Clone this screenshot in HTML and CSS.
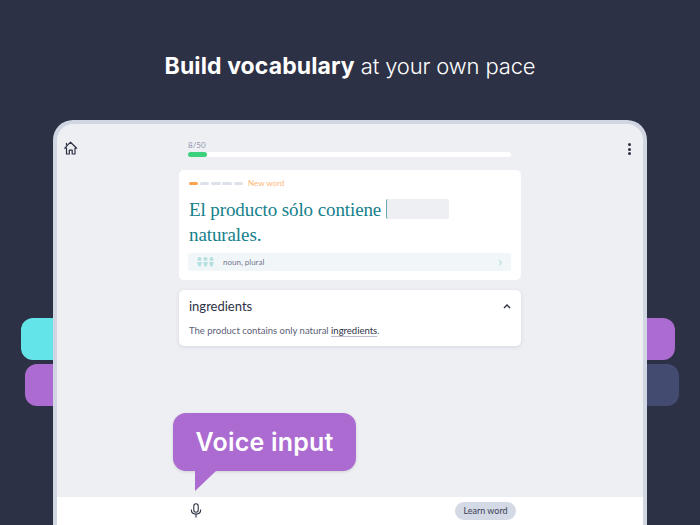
FILE: index.html
```html
<!DOCTYPE html>
<html>
  <head>
    <title>Build vocabulary at your own pace</title>
    <link rel="stylesheet" href="styles.css">
  </head>

  <body>
    <h1 class="headline"><b>Build vocabulary</b> at your own pace</h1>

    <div class="stage">
      <div class="tile tile-cyan"></div>
      <div class="tile tile-purple-left"></div>
      <div class="tile tile-purple-right"></div>
      <div class="tile tile-navy"></div>

      <div class="tablet">
        <div class="screen">
          <div class="topbar">
            <svg class="home" width="14" height="14" viewBox="0 0 14 14" fill="none" stroke="#2d3145" stroke-width="1.2">
              <path d="M.8 7.200 6.500 1.200l6.200 6h-1.700V13H8.200V9.200H5.300V13H2.500V7.200z" stroke-linejoin="round"/>
              <path d="M2.500 4.500V1.800"/>
            </svg>
            <div class="progress">
              <div class="count">8/50</div>
              <div class="track"><div class="fill"></div></div>
            </div>
            <div class="dots"><i></i><i></i><i></i></div>
          </div>

          <div class="column">
            <div class="card word-card">
              <div class="level">
                <i class="dash on"></i><i class="dash"></i><i class="dash"></i><i class="dash"></i><i class="dash"></i>
                <span>New word</span>
              </div>
              <p class="sentence">El producto sólo contiene <span class="blank"></span> naturales.</p>
              <div class="grammar">
                <svg class="people" width="17" height="10" viewBox="0 0 17 10" fill="#b5dfe0">
                  <circle cx="2.500" cy="2" r="2"/><circle cx="8.500" cy="2" r="2"/><circle cx="14.500" cy="2" r="2"/>
                  <path d="M0 5h5L3.500 9.500h-2zM6 5h5L9.500 9.500h-2zM12 5h5L15.500 9.500h-2z"/>
                </svg>
                <span class="grammar-text">noun, plural</span>
                <svg class="more" width="5" height="7" viewBox="0 0 5 7" fill="none" stroke="#c5dfe3" stroke-width="1.200"><path d="M1 1l2.500 2.500L1 6"/></svg>
              </div>
            </div>

            <div class="card hint-card">
              <div class="hint-head">
                <span class="hint-word">ingredients</span>
                <svg width="8" height="5" viewBox="0 0 8 5" fill="none" stroke="#2d3145" stroke-width="1.400"><path d="M1 4l3-3 3 3"/></svg>
              </div>
              <p class="hint-text">The product contains only natural <u>ingredients</u>.</p>
            </div>
          </div>

          <div class="bottombar">
            <svg class="mic" width="12" height="15" viewBox="0 0 12 15" fill="none" stroke="#2d3145" stroke-width="1.100">
              <rect x="3.800" y="0.800" width="4.400" height="8.400" rx="2.200"/>
              <path d="M1.300 6.500c0 6.200 9.400 6.200 9.400 0M6 11v3.500"/>
            </svg>
            <div class="learn">Learn word</div>
          </div>

          <div class="bubble">Voice input</div>
        </div>
      </div>
    </div>
  </body>
</html>
```

FILE: styles.css
```css
html, body {
  margin: 0;
  padding: 0;
}

body {
  width: 700px;
  height: 525px;
  overflow: hidden;
  background: #2d3145;
  font-family: Lato, sans-serif;
}

.headline {
  margin: 0;
  padding-top: 52px;
  height: 68px;
  box-sizing: border-box;
  text-align: center;
  font-family: Inter, sans-serif;
  font-size: 22px;
  line-height: 28px;
  font-weight: 300;
  letter-spacing: -0.15px;
  color: #fff;
}

.headline b {
  font-size: 23px;
  font-weight: 700;
  letter-spacing: 0.1px;
}

.stage {
  position: relative;
  margin-top: 52px;
  height: 405px;
}

/* the coloured blocks that peek out behind the tablet */
.tile {
  position: absolute;
  width: 60px;
  height: 42px;
  border-radius: 12px;
}

.tile-cyan {
  left: 21px;
  top: 198px;
  background: #62e4e9;
}

.tile-purple-left {
  left: 25px;
  top: 244px;
  background: #ab6bd0;
}

.tile-purple-right {
  left: 615px;
  top: 198px;
  background: #ab6bd0;
}

.tile-navy {
  left: 619px;
  top: 244px;
  background: #444b70;
}

.tablet {
  position: relative;
  margin: 0 53px;
  height: 405px;
  box-sizing: border-box;
  border: 4px solid #d0d7e3;
  border-bottom: none;
  border-radius: 20px 20px 0 0;
  background: #eeeff3;
}

.screen {
  display: flex;
  flex-direction: column;
  height: 100%;
}

.topbar {
  display: flex;
  align-items: flex-start;
  height: 46px;
  padding: 17px 0 0 7px;
  box-sizing: border-box;
}

.home {
  flex: none;
}

.progress {
  margin-left: 110px;
  width: 323px;
  margin-top: -1px;
}

.count {
  font-size: 8px;
  line-height: 10px;
  color: #8f94ab;
}

.track {
  margin-top: 2px;
  height: 5px;
  border-radius: 3px;
  background: #fff;
}

.fill {
  width: 19px;
  height: 5px;
  border-radius: 3px;
  background: #3bd07c;
}

.dots {
  display: flex;
  flex-direction: column;
  gap: 1.500px;
  margin: 2px 0 0 117px;
}

.dots i {
  display: block;
  width: 3px;
  height: 3px;
  border-radius: 50%;
  background: #2d3145;
}

.column {
  flex: 1;
  width: 342px;
  margin-left: 122px;
}

.card {
  background: #fff;
  border-radius: 5px;
}

.word-card {
  height: 110px;
  padding: 9px 9px 0;
  box-sizing: border-box;
}

.level {
  display: flex;
  align-items: center;
  gap: 1.800px;
  height: 8px;
  padding-left: 0.500px;
}

.dash {
  display: block;
  width: 9.500px;
  height: 3px;
  border-radius: 2px;
  background: #dde1ea;
}

.dash.on {
  background: #fba34e;
}

.level span {
  margin-left: 3px;
  font-size: 8px;
  color: #fdb877;
}

.sentence {
  margin: 10px 0 0;
  padding-left: 1px;
  height: 50px;
  font-family: "Liberation Serif", serif;
  font-size: 19px;
  line-height: 25px;
  letter-spacing: -0.1px;
  color: #14808c;
}

.blank {
  display: inline-block;
  width: 63px;
  height: 20px;
  margin-bottom: -3px;
  box-sizing: border-box;
  border-left: 1px solid #6aa9b2;
  border-radius: 2px;
  background: #eeeff3;
  vertical-align: baseline;
}

.grammar {
  display: flex;
  align-items: center;
  width: 323px;
  height: 18px;
  margin-top: 6px;
  padding: 0 8px 0 9px;
  box-sizing: border-box;
  border-radius: 3px;
  background: #f1f6f8;
}

.grammar-text {
  margin-left: 9px;
  font-size: 8px;
  color: #71768f;
}

.more {
  margin-left: auto;
}

.hint-card {
  margin-top: 10px;
  height: 56px;
  padding: 8px 10px 0;
  box-sizing: border-box;
  box-shadow: 0 1px 4px rgba(45, 49, 69, 0.12);
}

.hint-head {
  display: flex;
  align-items: center;
  justify-content: space-between;
  height: 16px;
}

.hint-word {
  font-size: 13px;
  color: #2d3145;
}

.hint-text {
  margin: 10px 0 0;
  font-size: 9.500px;
  line-height: 14px;
  color: #5c6075;
}

.hint-text u {
  color: #2d3145;
  text-decoration-color: #b9bdcc;
  text-underline-offset: 2px;
}

.bottombar {
  display: flex;
  align-items: center;
  height: 28px;
  background: #fff;
}

.mic {
  margin: -1px 0 0 133px;
}

.learn {
  margin-left: 253px;
  width: 61px;
  height: 18px;
  border-radius: 9px;
  background: #d3d9e5;
  text-align: center;
  font-size: 9px;
  line-height: 18px;
  color: #3c4056;
}

.bubble {
  position: absolute;
  left: 116px;
  top: 289px;
  width: 183px;
  height: 58px;
  border-radius: 13px;
  background: #ab6bd0;
  box-shadow: 0 1px 3px rgba(45, 49, 69, 0.15);
  text-align: center;
  font-family: Inter, sans-serif;
  font-size: 25px;
  font-weight: 600;
  line-height: 58px;
  letter-spacing: 0.2px;
  color: #fff;
}

.bubble::after {
  content: "";
  position: absolute;
  left: 22px;
  top: 58px;
  border-top: 20px solid #ab6bd0;
  border-right: 21px solid transparent;
}
```
